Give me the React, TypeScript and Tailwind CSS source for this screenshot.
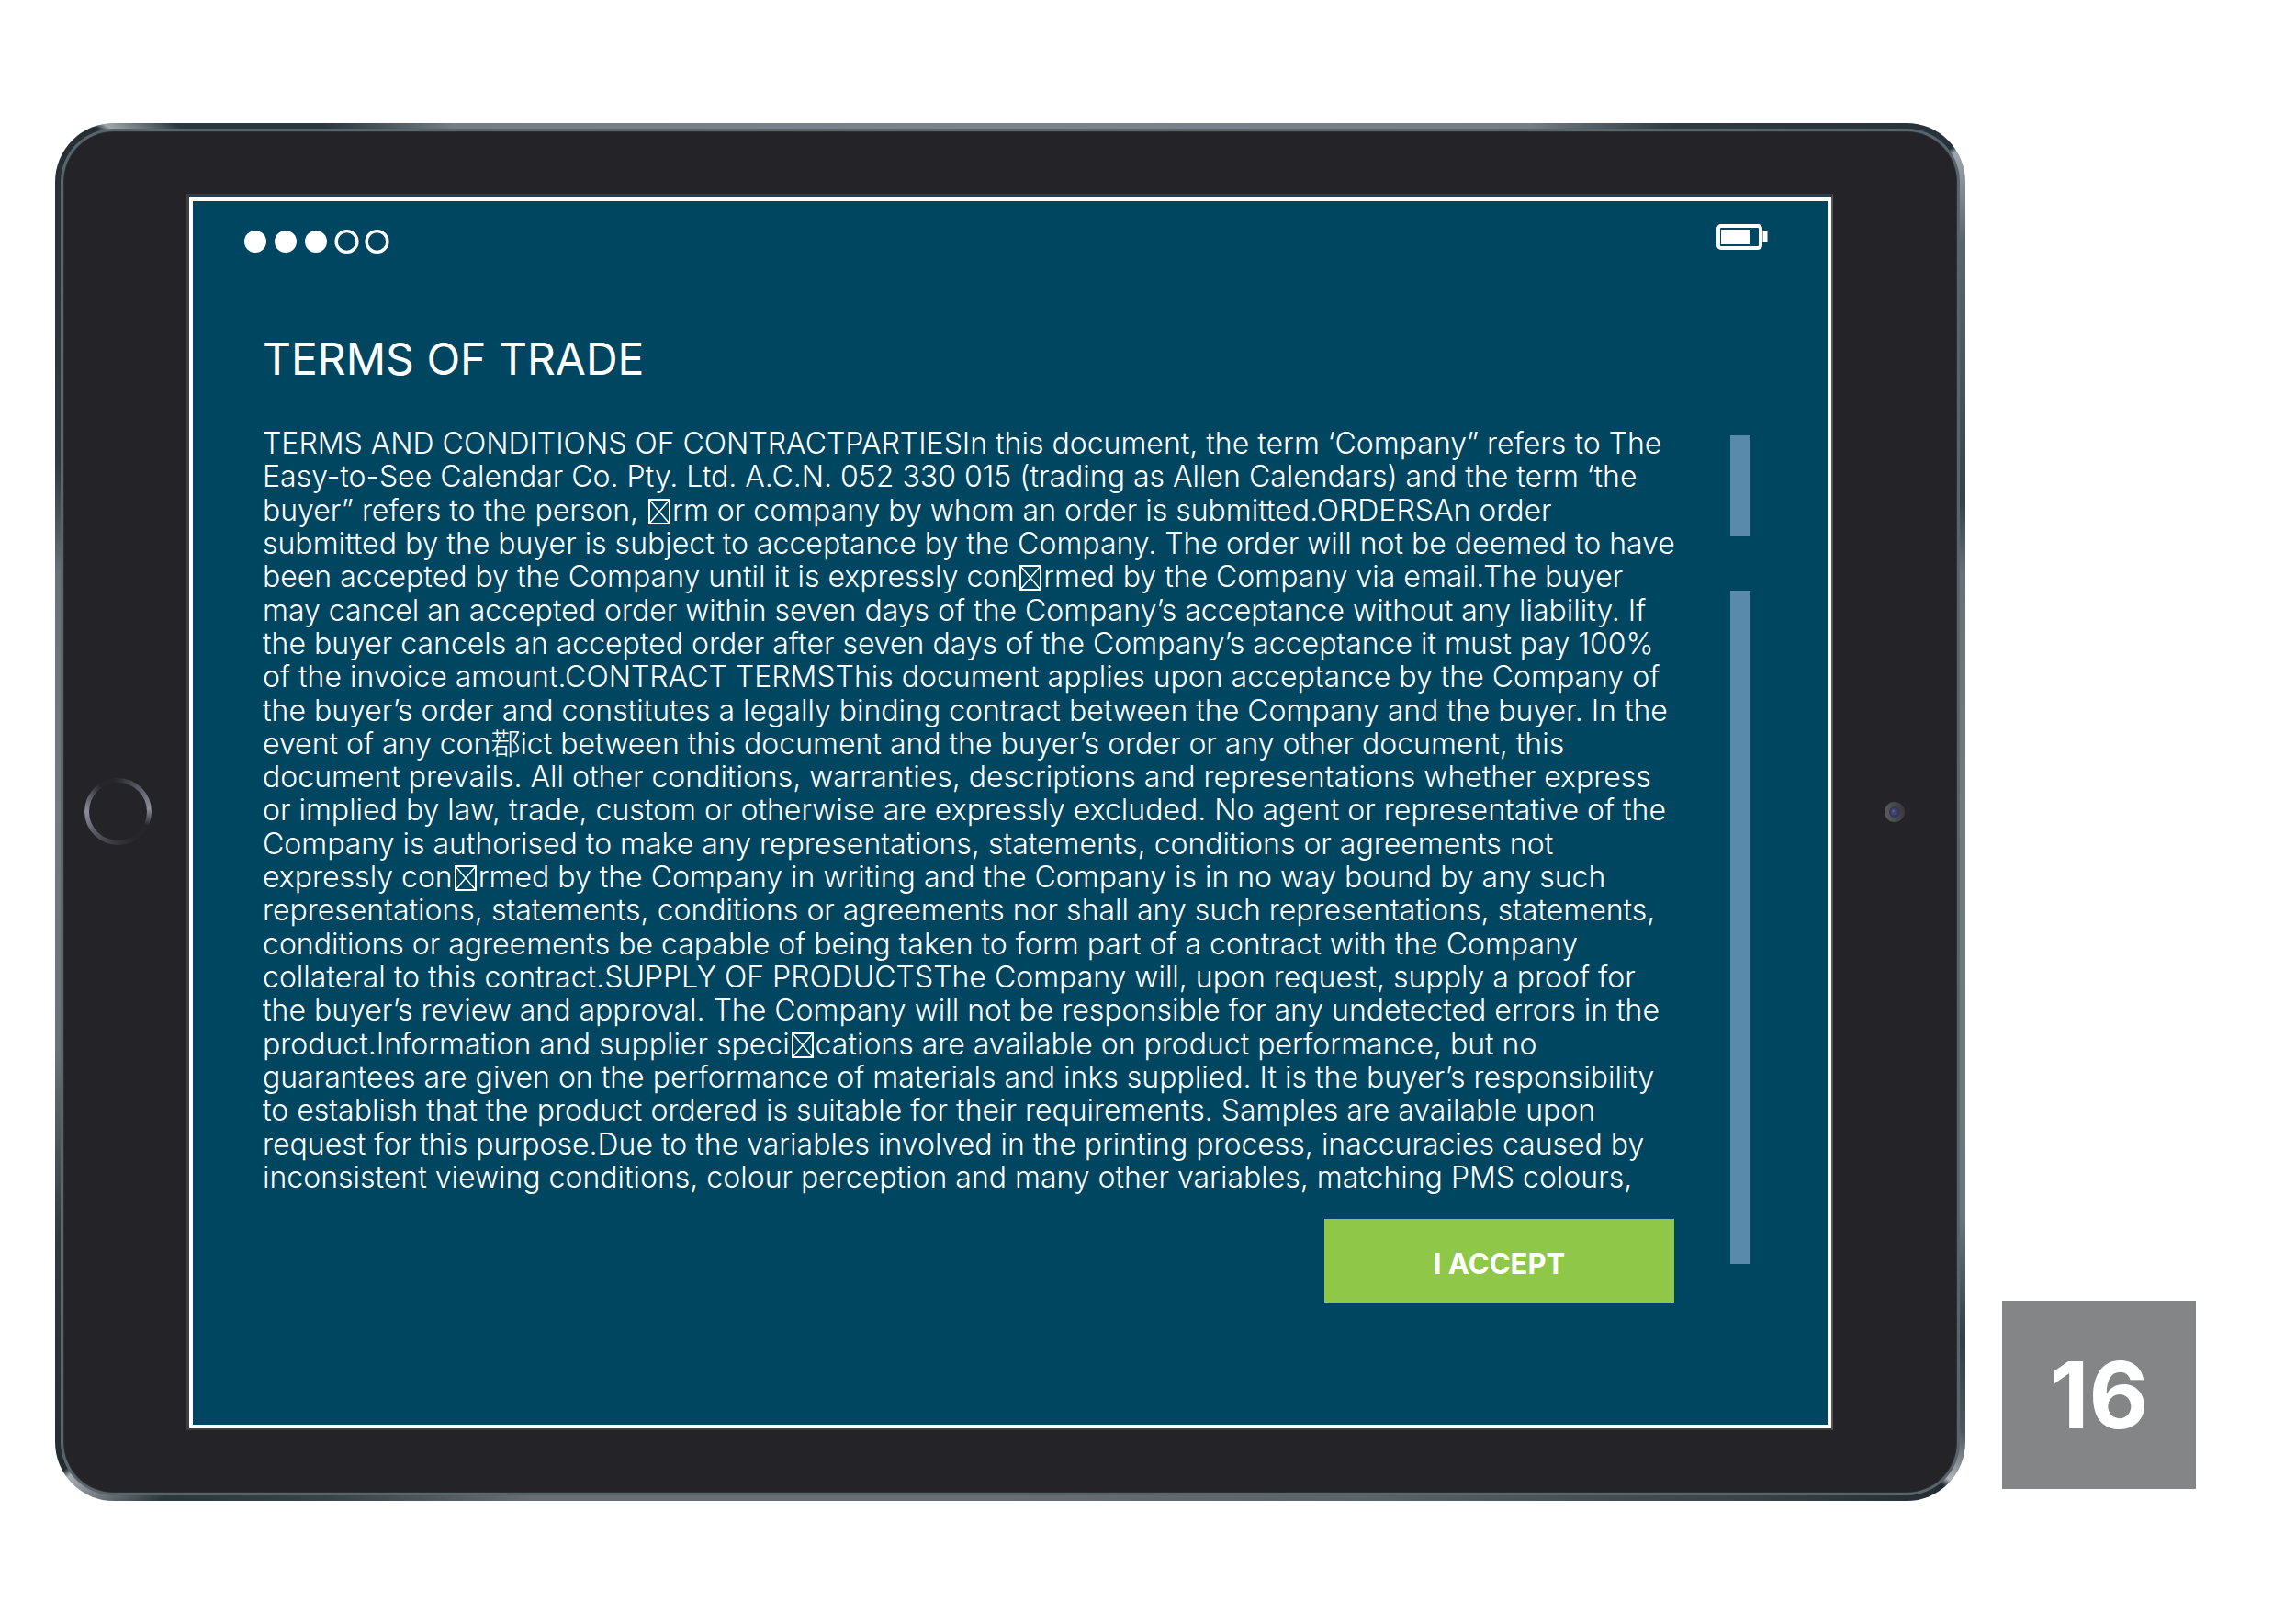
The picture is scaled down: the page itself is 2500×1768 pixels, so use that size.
const TERMS: string[] = [
  'TERMS AND CONDITIONS OF CONTRACTPARTIESIn this document, the term ‘Company” refers to The',
  'Easy-to-See Calendar Co. Pty. Ltd. A.C.N. 052 330 015 (trading as Allen Calendars) and the term ‘the',
  'buyer” refers to the person, \uFFFDrm or company by whom an order is submitted.ORDERSAn order',
  'submitted by the buyer is subject to acceptance by the Company. The order will not be deemed to have',
  'been accepted by the Company until it is expressly con\uFFFDrmed by the Company via email.The buyer',
  'may cancel an accepted order within seven days of the Company’s acceptance without any liability. If',
  'the buyer cancels an accepted order after seven days of the Company’s acceptance it must pay 100%',
  'of the invoice amount.CONTRACT TERMSThis document applies upon acceptance by the Company of',
  'the buyer’s order and constitutes a legally binding contract between the Company and the buyer. In the',
  'event of any con鄀ict between this document and the buyer’s order or any other document, this',
  'document prevails. All other conditions, warranties, descriptions and representations whether express',
  'or implied by law, trade, custom or otherwise are expressly excluded. No agent or representative of the',
  'Company is authorised to make any representations, statements, conditions or agreements not',
  'expressly con\uFFFDrmed by the Company in writing and the Company is in no way bound by any such',
  'representations, statements, conditions or agreements nor shall any such representations, statements,',
  'conditions or agreements be capable of being taken to form part of a contract with the Company',
  'collateral to this contract.SUPPLY OF PRODUCTSThe Company will, upon request, supply a proof for',
  'the buyer’s review and approval. The Company will not be responsible for any undetected errors in the',
  'product.Information and supplier speci\uFFFDcations are available on product performance, but no',
  'guarantees are given on the performance of materials and inks supplied. It is the buyer’s responsibility',
  'to establish that the product ordered is suitable for their requirements. Samples are available upon',
  'request for this purpose.Due to the variables involved in the printing process, inaccuracies caused by',
  'inconsistent viewing conditions, colour perception and many other variables, matching PMS colours,',
];

/* Crossed box shown where the font has no glyph. */
function MissingGlyph() {
  return (
    <svg className="mx-[2px] inline-block h-[28px] w-[24px] align-[-4px]" viewBox="0 0 24 28" fill="none" stroke="currentColor" strokeWidth="2" aria-hidden="true">
      <path d="M1 1h22v26H1z" />
      <path d="M1 1l22 26M23 1L1 27" strokeWidth="1.5" />
    </svg>
  );
}

function TermsLine({ text }: { text: string }) {
  const parts = text.split('\uFFFD');
  return (
    <span className="block h-[36px] whitespace-nowrap">
      {parts.map((part, i) => (
        <span key={i}>
          {i > 0 && <MissingGlyph />}
          {part}
        </span>
      ))}
    </span>
  );
}

function StatusBar() {
  return (
    <header className="flex items-start justify-between pl-[55px] pr-[65px]">
      <div className="mt-[6px] flex gap-[7px]" role="img" aria-label="Signal strength 3 of 5">
        {[true, true, true, false, false].map((on, i) => (
          <svg key={i} className="size-[26px] overflow-visible" viewBox="0 0 26 26" aria-hidden="true">
            {on ? (
              <circle cx="13" cy="13" r="12" fill="#fff" />
            ) : (
              <circle cx="13.5" cy="13" r="11.4" fill="none" stroke="#fff" strokeWidth="3.4" />
            )}
          </svg>
        ))}
      </div>
      <svg className="h-[28px] w-[56px]" viewBox="0 0 56 28" role="img" aria-label="Battery">
        <rect x="2" y="2" width="46" height="24" rx="3" fill="none" stroke="#fff" strokeWidth="4" />
        <rect x="5" y="6" width="31" height="16" fill="#fff" />
        <rect x="50.5" y="7" width="5" height="13" fill="#fff" />
      </svg>
    </header>
  );
}

function ScrollTrack() {
  return (
    <div className="flex w-[22px] flex-col gap-[59px] pt-[9px] pb-[42px]" aria-hidden="true">
      <div className="h-[110px] bg-[#5a8aab]" />
      <div className="flex-1 bg-[#5a8aab]" />
    </div>
  );
}

function Screen() {
  return (
    <div className="min-w-0 flex-1 border-t-4 border-r-2 border-b-2 border-l-[3px] border-t-[#2b3d49] border-r-[#55575a] border-b-[#3c3c40] border-l-[#3f3e41]">
      <section className="border-4 border-white bg-[#004661] pt-[25px] pb-[133px] text-white">
        <StatusBar />
        <h1 className="mt-[88px] pl-[76px] text-[48px] leading-[54px] font-normal">TERMS OF TRADE</h1>
        <div className="mt-[47px] flex justify-between pr-[84px] pl-[76px]">
          <div className="mr-[61px] flex min-w-0 flex-1 flex-col">
            <p className="flex h-[835px] flex-col justify-between text-[32px] leading-[36px] font-light">
              {TERMS.map((line) => (
                <TermsLine key={line} text={line} />
              ))}
            </p>
            <button
              type="button"
              className="mt-[27px] flex h-[91px] w-[381px] items-center justify-center self-end bg-[#8fc849] pt-[7px] text-[31px] leading-[36px] font-bold"
            >
              I ACCEPT
            </button>
          </div>
          <ScrollTrack />
        </div>
      </section>
    </div>
  );
}

function HomeButton() {
  return (
    <button
      type="button"
      aria-label="Home"
      className="ml-[22px] size-[73px] rounded-full bg-[conic-gradient(#2c2c31_0deg,#3d3d44_15deg,#6f707c_60deg,#8d8e9b_85deg,#4a4a52_105deg,#27272b_115deg,#26262a_145deg,#333338_180deg,#55555d_225deg,#8d8e9b_270deg,#50505a_305deg,#27272b_325deg,#27272b_350deg,#2c2c31_360deg)] p-[5px]"
    >
      <span className="block size-full rounded-full bg-[#242328]" />
    </button>
  );
}

function Camera() {
  return (
    <svg className="ml-[56px] size-[22px]" viewBox="0 0 22 22" aria-hidden="true">
      <defs>
        <linearGradient id="lensRim" x1="0" y1="0.6" x2="1" y2="0.4">
          <stop offset="0" stopColor="#5b5c62" />
          <stop offset="1" stopColor="#37373b" />
        </linearGradient>
      </defs>
      <circle cx="11" cy="11" r="11" fill="url(#lensRim)" />
      <circle cx="11" cy="11" r="6" fill="#343852" />
      <circle cx="10.5" cy="11" r="3.6" fill="#3f4673" />
      <circle cx="9.5" cy="10" r="1.2" fill="#59629b" />
    </svg>
  );
}

function Tablet() {
  return (
    <div className="min-w-0 flex-1 rounded-[64px] bg-[conic-gradient(#7b848a_0deg,#757e84_37deg,#2f3b43_44deg,#26313a_54.8deg,#a0a8ad_55.1deg,#5b666c_59deg,#36424a_72deg,#687276_76deg,#727b7d_90deg,#68787a_113deg,#333e48_119deg,#4c565c_123deg,#b0b5b9_125.4deg,#232c33_125.8deg,#3a434b_133deg,#5a626a_152deg,#696e76_180deg,#696e76_215deg,#38424b_225deg,#2c363e_231deg,#a9aeb2_234.8deg,#232c31_235.2deg,#2f3a3c_246deg,#687377_256deg,#727b7d_270deg,#687377_284deg,#2f3a42_290deg,#262e34_306.8deg,#a0a8ad_307.2deg,#2b3740_309.5deg,#2b3740_315deg,#757e84_321deg,#7b848a_360deg)] p-[6px]">
      <div className="rounded-[58px] bg-[#59646b] p-[3px]">
        <div className="rounded-[55px] bg-[#2a3034] p-px">
          <div className="flex items-center rounded-[54px] bg-[#242328] py-[67px]">
            <div className="w-[133px]">
              <HomeButton />
            </div>
            <Screen />
            <div className="w-[134px]">
              <Camera />
            </div>
          </div>
        </div>
      </div>
    </div>
  );
}

export default function App() {
  return (
    <main className="flex min-h-screen items-end gap-[40px] bg-white py-[134px] pr-[109px] pl-[60px] font-['Inter','Noto_Sans_CJK_SC',sans-serif]">
      <Tablet />
      <aside className="mb-[13px] flex h-[205px] w-[211px] items-center justify-center bg-[#838587] text-[100px] leading-none font-bold text-white">
        16
      </aside>
    </main>
  );
}
